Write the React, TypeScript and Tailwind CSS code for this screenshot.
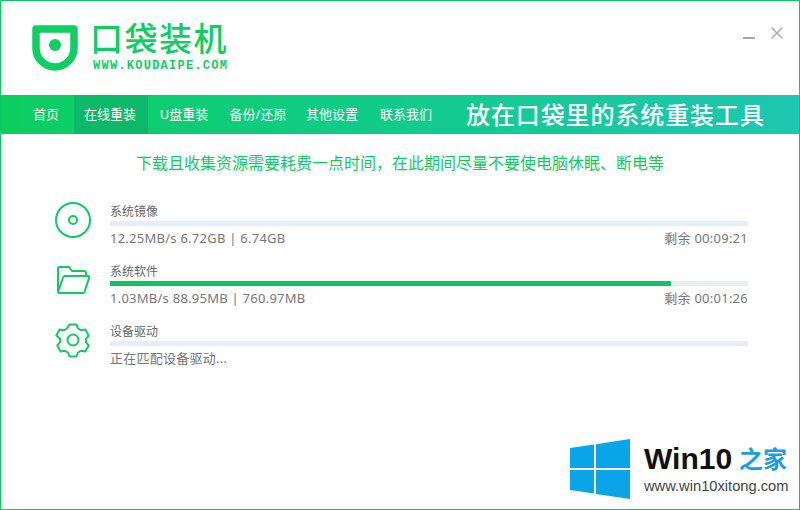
import React from "react";

const cjk = "font-['Noto_Sans','Noto_Sans_CJK_SC',sans-serif]";

const navItems = ["U盘重装", "备份/还原", "其他设置", "联系我们"];

const DiscIcon = () => (
  <svg width="36" height="36" viewBox="0 0 36 36" fill="none" stroke="#0fc961" strokeWidth="2">
    <circle cx="18" cy="18" r="17" />
    <circle cx="18" cy="18" r="4" />
  </svg>
);

const FolderIcon = () => (
  <svg width="36" height="30" viewBox="0 0 36 30" fill="none" stroke="#0fc961" strokeWidth="2" strokeLinejoin="round">
    <path d="M6 28H4A1.500 1.500 0 0 1 3 26.500V3.500A1.500 1.500 0 0 1 4.500 2H14l3 4h12.500A1.500 1.500 0 0 1 31 7.500V11" />
    <path d="M3 27 8 12.500A2 2 0 0 1 9.800 11H33a1.200 1.200 0 0 1 1.200 1.600L29.500 27A1.500 1.500 0 0 1 28 28H4" />
  </svg>
);

const GearIcon = () => (
  <svg width="36" height="36" viewBox="0 0 36 36" fill="none" stroke="#0fc961" strokeWidth="2" strokeLinejoin="round">
    <path d="M14.500 2.500h7l1.500 4 3 1.700 4.300-.7 3.400 6-2.800 3.300v3.400l2.800 3.300-3.400 6-4.300-.7-3 1.700-1.500 4h-7l-1.500-4-3-1.700-4.300.7-3.400-6 2.800-3.300v-3.400L1.300 13.500l3.400-6 4.300.7 3-1.700z" />
    <circle cx="18" cy="18" r="5.500" />
  </svg>
);

const Shield = () => (
  <svg width="46" height="46" viewBox="0 0 46 46">
    <path
      d="M4 4h38v19a19 19 0 0 1-38 0z"
      fill="none"
      stroke="#0fce62"
      strokeWidth="7.500"
      strokeLinejoin="round"
    />
    <circle cx="23" cy="20" r="6" fill="#0fce62" />
  </svg>
);

const WinLogo = () => (
  <svg width="60" height="60" viewBox="0 0 60 60" fill="#0aa5e8">
    <path d="M0 9 24 5.500V29H0z" />
    <path d="M26 5.200 60 0V29H26z" />
    <path d="M0 31H24V54.500L0 51z" />
    <path d="M26 31H60V60L26 55z" />
  </svg>
);

const Row = ({
  icon,
  title,
  stats,
  remain,
  percent,
}: {
  icon: React.ReactNode;
  title: string;
  stats: string;
  remain?: string;
  percent: number;
}) => (
  <div className="flex h-[60px]">
    <div className="w-[55px] h-[38px] shrink-0 flex items-center">{icon}</div>
    <div className="w-[638px]">
      <div className="h-[20px] text-[12px] leading-[21px] text-[#666]">{title}</div>
      <div className="h-[5px] bg-[#e6edf8]">
        <div className="h-full bg-[#0cc65e]" style={{ width: `${percent}%` }} />
      </div>
      <div className="h-[25px] flex justify-between items-center text-[13px] tracking-[0.25px] text-[#777]">
        <span>{stats}</span>
        {remain && <span>剩余 {remain}</span>}
      </div>
    </div>
  </div>
);

export default function App() {
  return (
    <div className={`relative w-[800px] h-[510px] bg-white border border-[#0cc864] overflow-hidden ${cjk}`}>
      {/* logo + window buttons */}
      <div className="relative h-[94px] flex pl-[31px] pt-[24px]">
        <Shield />
        <div className="ml-[12px]">
          <div className="h-[32px] -mt-[2px] text-[33px] leading-[32px] font-medium tracking-[1.500px] text-[#0fce62]">口袋装机</div>
          <div className="mt-[5px] ml-[3px] text-[12px] leading-[12px] font-bold tracking-[1.250px] text-[#0fce62] font-['Liberation_Mono',monospace]">
            WWW.KOUDAIPE.COM
          </div>
        </div>
        <div className="absolute top-[26px] right-[16px] flex items-center gap-[16px]">
          <div className="w-[12px] h-[2px] mt-[9px] bg-[#aaa]" />
          <svg width="12" height="12" viewBox="0 0 12 12" stroke="#aaa" strokeWidth="1.500">
            <path d="M.500.500 11.500 11.500M11.500.500.500 11.500" />
          </svg>
        </div>
      </div>

      {/* nav bar */}
      <div className="h-[39px] flex items-center text-[13px] text-white bg-gradient-to-r from-[#0cce5e] to-[#1dc7b0]">
        <div className="w-[73px] pl-[17px] h-full flex items-center justify-center">首页</div>
        <div className="w-[74px] h-full flex items-center justify-center bg-[#0cb968] pr-[2px]">在线重装</div>
        {navItems.map((item) => (
          <div key={item} className="w-[74px] h-full flex items-center justify-center pr-[2px]">
            {item}
          </div>
        ))}
        <div className="ml-[22px] text-[24px] font-medium tracking-[0.9px] whitespace-nowrap">放在口袋里的系统重装工具</div>
      </div>

      <div className="h-[67px] pt-[18px] text-center text-[16px] leading-[22px] text-[#12c95f]">
        下载且收集资源需要耗费一点时间，在此期间尽量不要使电脑休眠、断电等
      </div>

      <div className="ml-[54px]">
        <Row icon={<DiscIcon />} title="系统镜像" stats="12.25MB/s 6.72GB | 6.74GB" remain="00:09:21" percent={0} />
        <Row icon={<FolderIcon />} title="系统软件" stats="1.03MB/s 88.95MB | 760.97MB" remain="00:01:26" percent={88} />
        <Row icon={<GearIcon />} title="设备驱动" stats="正在匹配设备驱动..." percent={0} />
      </div>

      {/* watermark */}
      <div className="absolute left-[569px] top-[438px] flex items-start">
        <WinLogo />
        <div className="ml-[14px] mt-[6px]">
          <div className="flex items-center h-[28px]">
            <span className="text-[30px] leading-[28px] font-bold text-[#111] font-['Liberation_Sans',sans-serif]">Win10</span>
            <span className="ml-[7px] text-[24px] leading-[28px] font-bold text-[#1c9de0]">之家</span>
          </div>
          <div className="mt-[4px] text-[14.700px] leading-[18px] text-[#444] font-['Liberation_Sans',sans-serif]">www.win10xitong.com</div>
        </div>
      </div>
    </div>
  );
}
